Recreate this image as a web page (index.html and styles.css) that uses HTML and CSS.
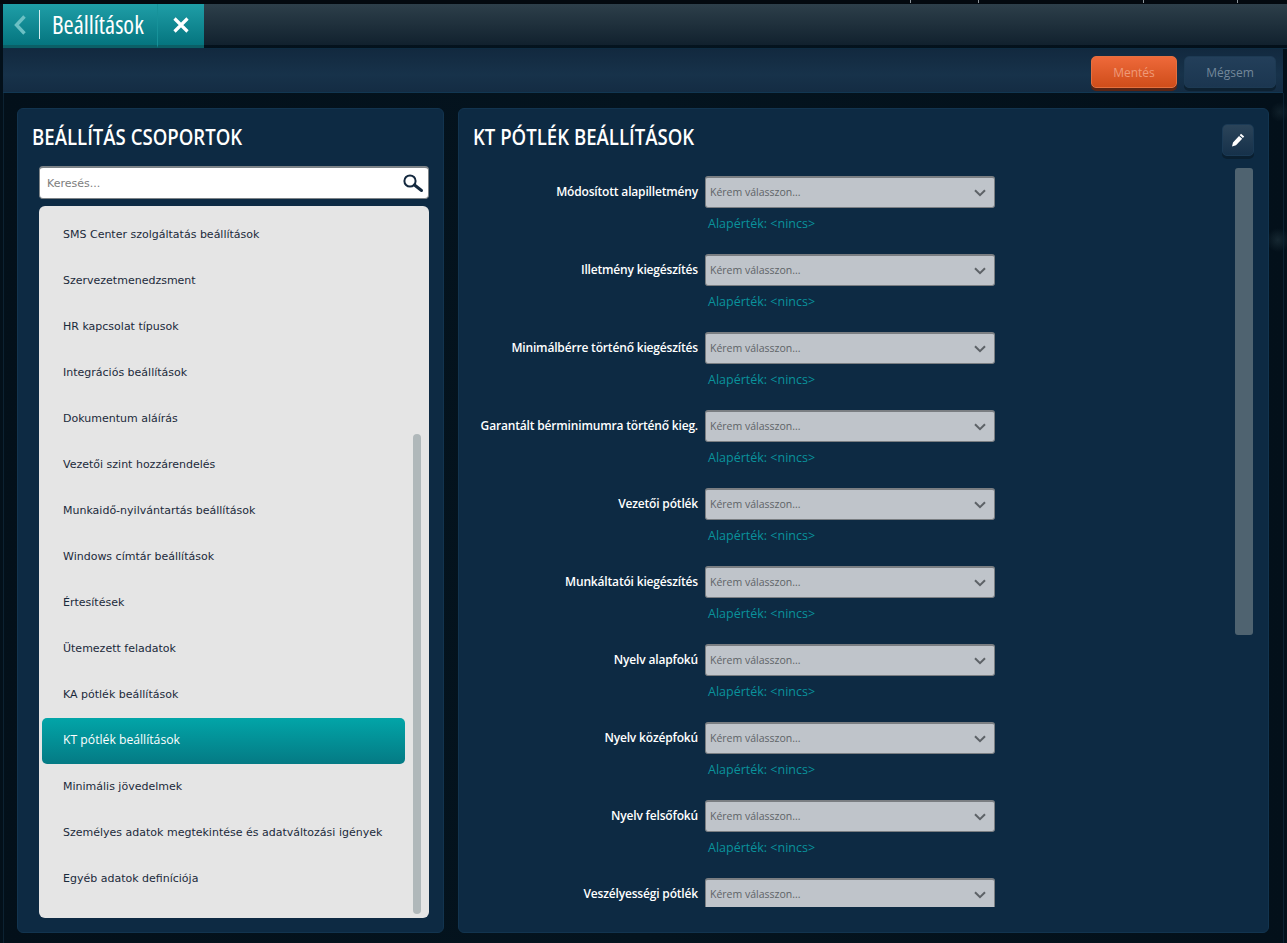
FILE: index.html
```html
<!DOCTYPE html>
<html lang="hu">
<head>
    <meta charset="utf-8">
    <title>Beállítások</title>
    <link rel="stylesheet" href="styles.css">
</head>
<body>
    <div class="top-ticks">
        <span class="tick"></span><span class="tick"></span><span class="tick"></span><span class="tick"></span>
    </div>
    <header class="title-bar">
        <div class="tab">
            <svg class="tab-back" width="14" height="20" viewBox="0 0 14 20"><path d="M11.5 1.5 L3.5 10 L11.5 18.5" fill="none" stroke="#6cc0c4" stroke-width="3.4"/></svg>
            <span class="tab-sep"></span>
            <span class="tab-title">Beállítások</span>
        </div>
        <div class="tab tab-close">
            <svg width="18" height="18" viewBox="0 0 18 18"><path d="M2.5 2.5 L15.5 15.5 M15.5 2.5 L2.5 15.5" fill="none" stroke="#fff" stroke-width="3.2"/></svg>
        </div>
    </header>
    <div class="toolbar">
        <button class="btn btn-save">Mentés</button>
        <button class="btn btn-cancel">Mégsem</button>
    </div>

    <main class="main">
        <section class="panel panel-groups">
            <h2 class="panel-title">BEÁLLÍTÁS CSOPORTOK</h2>
            <div class="search">
                <input type="text" class="search-input" placeholder="Keresés...">
                <svg width="22" height="20" viewBox="0 0 22 20"><circle cx="8" cy="8" r="5.6" fill="none" stroke="#14293f" stroke-width="2"/><path d="M12.5 12 L19.5 17.5" stroke="#14293f" stroke-width="3" stroke-linecap="round"/></svg>
            </div>
            <div class="group-list">
                <div class="group-item">SMS Center szolgáltatás beállítások</div>
                <div class="group-item">Szervezetmenedzsment</div>
                <div class="group-item">HR kapcsolat típusok</div>
                <div class="group-item">Integrációs beállítások</div>
                <div class="group-item">Dokumentum aláírás</div>
                <div class="group-item">Vezetői szint hozzárendelés</div>
                <div class="group-item">Munkaidő-nyilvántartás beállítások</div>
                <div class="group-item">Windows címtár beállítások</div>
                <div class="group-item">Értesítések</div>
                <div class="group-item">Ütemezett feladatok</div>
                <div class="group-item">KA pótlék beállítások</div>
                <div class="group-item active">KT pótlék beállítások</div>
                <div class="group-item">Minimális jövedelmek</div>
                <div class="group-item">Személyes adatok megtekintése és adatváltozási igények</div>
                <div class="group-item">Egyéb adatok definíciója</div>
                <div class="list-scroll"></div>
            </div>
        </section>

        <section class="panel panel-form">
            <div class="form-head">
                <h2 class="panel-title">KT PÓTLÉK BEÁLLÍTÁSOK</h2>
                <button class="btn-edit">
                    <svg width="14" height="14" viewBox="0 0 14 14"><path d="M10 0.8 L13.2 3.6 L11.9 5 L8.7 2.2 Z M8 3 L11.2 5.8 L5 12.2 L1 13.4 L2 9.4 Z" fill="#fff"/></svg>
                </button>
            </div>
            <div class="form-body">
                <div class="form-row">
                    <label class="field-label">Módosított alapilletmény</label>
                    <div class="field">
                        <div class="select">Kérem válasszon...<svg class="chevron" width="12" height="8" viewBox="0 0 12 8"><path d="M1 1.2 L6 6.2 L11 1.2" fill="none" stroke="#5d6267" stroke-width="2"/></svg></div>
                        <div class="default-value">Alapérték: &lt;nincs&gt;</div>
                    </div>
                </div>
                <div class="form-row">
                    <label class="field-label">Illetmény kiegészítés</label>
                    <div class="field">
                        <div class="select">Kérem válasszon...<svg class="chevron" width="12" height="8" viewBox="0 0 12 8"><path d="M1 1.2 L6 6.2 L11 1.2" fill="none" stroke="#5d6267" stroke-width="2"/></svg></div>
                        <div class="default-value">Alapérték: &lt;nincs&gt;</div>
                    </div>
                </div>
                <div class="form-row">
                    <label class="field-label">Minimálbérre történő kiegészítés</label>
                    <div class="field">
                        <div class="select">Kérem válasszon...<svg class="chevron" width="12" height="8" viewBox="0 0 12 8"><path d="M1 1.2 L6 6.2 L11 1.2" fill="none" stroke="#5d6267" stroke-width="2"/></svg></div>
                        <div class="default-value">Alapérték: &lt;nincs&gt;</div>
                    </div>
                </div>
                <div class="form-row">
                    <label class="field-label">Garantált bérminimumra történő kieg.</label>
                    <div class="field">
                        <div class="select">Kérem válasszon...<svg class="chevron" width="12" height="8" viewBox="0 0 12 8"><path d="M1 1.2 L6 6.2 L11 1.2" fill="none" stroke="#5d6267" stroke-width="2"/></svg></div>
                        <div class="default-value">Alapérték: &lt;nincs&gt;</div>
                    </div>
                </div>
                <div class="form-row">
                    <label class="field-label">Vezetői pótlék</label>
                    <div class="field">
                        <div class="select">Kérem válasszon...<svg class="chevron" width="12" height="8" viewBox="0 0 12 8"><path d="M1 1.2 L6 6.2 L11 1.2" fill="none" stroke="#5d6267" stroke-width="2"/></svg></div>
                        <div class="default-value">Alapérték: &lt;nincs&gt;</div>
                    </div>
                </div>
                <div class="form-row">
                    <label class="field-label">Munkáltatói kiegészítés</label>
                    <div class="field">
                        <div class="select">Kérem válasszon...<svg class="chevron" width="12" height="8" viewBox="0 0 12 8"><path d="M1 1.2 L6 6.2 L11 1.2" fill="none" stroke="#5d6267" stroke-width="2"/></svg></div>
                        <div class="default-value">Alapérték: &lt;nincs&gt;</div>
                    </div>
                </div>
                <div class="form-row">
                    <label class="field-label">Nyelv alapfokú</label>
                    <div class="field">
                        <div class="select">Kérem válasszon...<svg class="chevron" width="12" height="8" viewBox="0 0 12 8"><path d="M1 1.2 L6 6.2 L11 1.2" fill="none" stroke="#5d6267" stroke-width="2"/></svg></div>
                        <div class="default-value">Alapérték: &lt;nincs&gt;</div>
                    </div>
                </div>
                <div class="form-row">
                    <label class="field-label">Nyelv középfokú</label>
                    <div class="field">
                        <div class="select">Kérem válasszon...<svg class="chevron" width="12" height="8" viewBox="0 0 12 8"><path d="M1 1.2 L6 6.2 L11 1.2" fill="none" stroke="#5d6267" stroke-width="2"/></svg></div>
                        <div class="default-value">Alapérték: &lt;nincs&gt;</div>
                    </div>
                </div>
                <div class="form-row">
                    <label class="field-label">Nyelv felsőfokú</label>
                    <div class="field">
                        <div class="select">Kérem válasszon...<svg class="chevron" width="12" height="8" viewBox="0 0 12 8"><path d="M1 1.2 L6 6.2 L11 1.2" fill="none" stroke="#5d6267" stroke-width="2"/></svg></div>
                        <div class="default-value">Alapérték: &lt;nincs&gt;</div>
                    </div>
                </div>
                <div class="form-row">
                    <label class="field-label">Veszélyességi pótlék</label>
                    <div class="field">
                        <div class="select select-cut">Kérem válasszon...<svg class="chevron" width="12" height="8" viewBox="0 0 12 8"><path d="M1 1.2 L6 6.2 L11 1.2" fill="none" stroke="#5d6267" stroke-width="2"/></svg></div>
                    </div>
                </div>
                <div class="form-scroll"></div>
            </div>
        </section>
    </main>
</body>
</html>
```

FILE: styles.css
```css
html, body {
    height: 100%;
}

body {
    margin: 0;
    height: 943px;
    overflow: hidden;
    background-color: #03101a;
    background-image:
        radial-gradient(circle at 1278px 240px, rgba(120,160,170,0.16), transparent 12px),
        radial-gradient(circle at 1280px 112px, rgba(120,160,170,0.1), transparent 10px),
        linear-gradient(90deg, #03101a 0%, #04141f 50%, #03101a 100%);
    font-family: "Open Sans", sans-serif;
    color: white;
}

.top-ticks {
    height: 4px;
    background-color: #03090f;
    position: relative;
}

.tick {
    position: absolute;
    top: 0;
    width: 1px;
    height: 3px;
    background-color: #8d969c;
}

.tick:nth-child(1) { left: 910px; }
.tick:nth-child(2) { left: 978px; }
.tick:nth-child(3) { left: 1143px; }
.tick:nth-child(4) { left: 1237px; }

.title-bar {
    display: flex;
    height: 41px;
    margin-left: 3px;
    background: linear-gradient(#2d3f4a, #0f1f2c);
    border-bottom: 1px solid #0e2c42;
    padding-bottom: 3px;
    background-clip: content-box;
    background-color: #0a1d2d;
}

.tab {
    display: flex;
    align-items: center;
    height: 44px;
    width: 155px;
    box-sizing: border-box;
    padding-left: 10px;
    background: linear-gradient(#1f9ea7, #05757f);
    border-bottom: 3px solid #0b5f66;
    border-right: 1px solid #17929a;
    flex-shrink: 0;
}

.tab-close {
    width: 46px;
    padding-left: 14px;
    border-right: 0;
}

.tab-back {
    flex-shrink: 0;
}

.tab-sep {
    width: 1px;
    height: 29px;
    margin-left: 12px;
    background-color: #d5eef0;
}

.tab-title {
    margin-left: 12px;
    font-family: "Open Sans", sans-serif;
    font-stretch: 75%;
    font-size: 24.5px;
    white-space: nowrap;
    color: white;
}

.toolbar {
    display: flex;
    justify-content: flex-end;
    gap: 7px;
    height: 44px;
    margin-left: 3px;
    margin-right: 4px;
    padding: 7px 7px 0 0;
    box-sizing: border-box;
    background: linear-gradient(#12293f, #17324a 60%, #142c43);
    border-bottom: 1px solid #123752;
}

.btn {
    height: 32px;
    border-radius: 5px;
    border: 0;
    font-family: "Open Sans", sans-serif;
    font-size: 12px;
}

.btn-save {
    width: 86px;
    color: #ef9a79;
    background: linear-gradient(#ee693a, #cf4d1a);
    border: 1px solid #e4703f;
    box-shadow: 0 3px 0 #5a2413;
}

.btn-cancel {
    width: 92px;
    color: #73879a;
    background: linear-gradient(#233f5a, #1b3650);
    border: 1px solid #1d3a53;
    box-shadow: 0 3px 0 #0d2131;
}

.main {
    display: flex;
    gap: 14px;
    height: 850px;
    margin: 0 3px;
    padding: 15px 0 10px 13px;
    box-sizing: border-box;
    border-left: 1px solid #0c2232;
    border-right: 1px solid #0c2232;
}

.panel {
    box-sizing: border-box;
    height: 825px;
    background-color: #0d2a43;
    border: 1px solid #12344f;
    border-radius: 6px;
}

.panel-groups {
    width: 427px;
    padding: 0 14px 0 21px;
    flex-shrink: 0;
}

.panel-form {
    width: 811px;
    padding: 0 14px 0 14px;
    flex-shrink: 0;
}

/* no semi-condensed face installed, so the normal width is narrowed */
.panel-title {
    margin: 0;
    font-family: "Open Sans", sans-serif;
    font-size: 22px;
    font-weight: 600;
    line-height: 27px;
    white-space: nowrap;
    color: white;
    transform: scaleX(0.845);
    transform-origin: left center;
}

.panel-groups .panel-title {
    margin: 14px 0 16px -7px;
}

.search {
    display: flex;
    align-items: center;
    height: 33px;
    box-sizing: border-box;
    padding: 0 4px 0 7px;
    background-color: white;
    border: 1px solid #7d8387;
    border-top-width: 2px;
    border-radius: 4px;
}

.search-input {
    flex: 1;
    border: 0;
    outline: 0;
    padding: 0;
    font-family: "DejaVu Sans", sans-serif;
    font-size: 11px;
    color: #333;
}

.search-input::placeholder {
    color: #7d7d7d;
}

.group-list {
    position: relative;
    height: 712px;
    margin-top: 7px;
    padding: 6px 24px 0 3px;
    box-sizing: border-box;
    overflow: hidden;
    background-color: #e5e5e5;
    border-radius: 6px;
}

.group-item {
    height: 46px;
    line-height: 46px;
    padding-left: 21px;
    border-radius: 5px;
    font-family: "DejaVu Sans", sans-serif;
    font-size: 11px;
    color: #1b2a3b;
    white-space: nowrap;
}

.group-item.active {
    font-family: "Open Sans", sans-serif;
    font-size: 12.2px;
    font-weight: 500;
    line-height: 44px;
    color: white;
    background: linear-gradient(#02a5a8, #047a84);
}

.list-scroll {
    position: absolute;
    top: 228px;
    left: 374px;
    width: 8px;
    height: 480px;
    border-radius: 4px;
    background-color: #b0b8ba;
}

.form-head {
    display: flex;
    justify-content: space-between;
    align-items: flex-start;
    height: 59px;
    padding-top: 14px;
    padding-right: 0;
    box-sizing: border-box;
}

.btn-edit {
    display: flex;
    align-items: center;
    justify-content: center;
    width: 32px;
    height: 32px;
    margin-top: 1px;
    padding: 0;
    border: 1px solid #1b3a55;
    border-radius: 5px;
    background: linear-gradient(#2b4459, #16314a);
    box-shadow: 0 3px 0 #0a1f30;
}

.form-body {
    position: relative;
    height: 739px;
    padding-left: 1px;
    overflow: hidden;
}

.form-row {
    display: flex;
    height: 78px;
    padding-top: 8px;
    box-sizing: border-box;
}

.field-label {
    width: 224px;
    margin-right: 7px;
    text-align: right;
    font-size: 12px;
    font-weight: 600;
    letter-spacing: -0.17px;
    line-height: 32px;
    white-space: nowrap;
}

.field {
    width: 290px;
}

.select {
    position: relative;
    height: 32px;
    box-sizing: border-box;
    padding-left: 4px;
    line-height: 29px;
    font-size: 10.5px;
    color: #5e6367;
    background-color: #bfc4ca;
    border: 1px solid #7a7e82;
    border-top-width: 2px;
    border-radius: 3px;
}

.chevron {
    position: absolute;
    top: 11px;
    right: 8px;
}

.default-value {
    margin-top: 8px;
    padding-left: 3px;
    font-size: 12.5px;
    line-height: 16px;
    color: #0a929c;
}

.form-scroll {
    position: absolute;
    top: 0;
    left: 762px;
    width: 18px;
    height: 467px;
    border-radius: 3px;
    background-color: #4f6370;
}
```
